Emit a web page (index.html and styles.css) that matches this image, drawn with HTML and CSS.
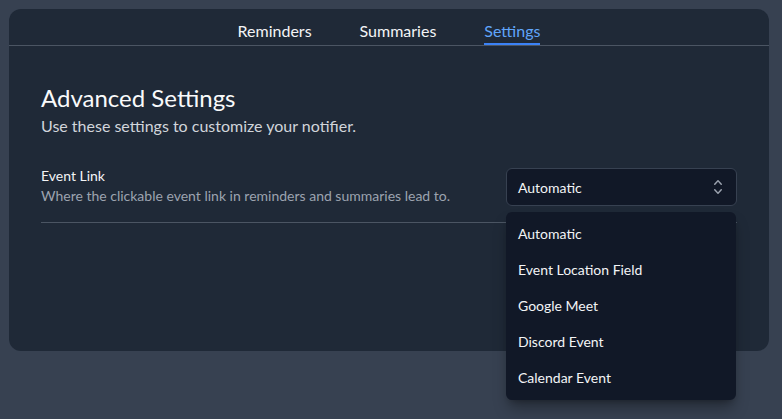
FILE: index.html
```html
<!DOCTYPE html>
<html lang="en">
<head>
<meta charset="utf-8">
<title>Advanced Settings</title>
<link rel="stylesheet" href="styles.css">
</head>
<body>
<div class="card">
  <nav class="tabs">
    <a class="tab">Reminders</a>
    <a class="tab">Summaries</a>
    <a class="tab active">Settings</a>
  </nav>
  <section class="content">
    <h1 class="title">Advanced Settings</h1>
    <p class="subtitle">Use these settings to customize your notifier.</p>
    <div class="setting">
      <div class="setting-text">
        <div class="setting-label">Event Link</div>
        <div class="setting-desc">Where the clickable event link in reminders and summaries lead to.</div>
      </div>
      <div class="select-wrap">
        <button class="select">
          <span>Automatic</span>
          <svg class="chevron" viewBox="0 0 20 20" fill="currentColor" aria-hidden="true"><path fill-rule="evenodd" d="M10 3a.75.75 0 01.55.24l3.25 3.5a.75.75 0 11-1.1 1.02L10 4.852 7.3 7.76a.75.75 0 01-1.1-1.02l3.25-3.5A.75.75 0 0110 3zm-3.76 9.2a.75.75 0 011.06.04l2.7 2.908 2.7-2.908a.75.75 0 111.1 1.02l-3.25 3.5a.75.75 0 01-1.1 0l-3.25-3.5a.75.75 0 01.04-1.06z" clip-rule="evenodd"/></svg>
        </button>
        <ul class="options">
          <li class="option">Automatic</li>
          <li class="option">Event Location Field</li>
          <li class="option">Google Meet</li>
          <li class="option">Discord Event</li>
          <li class="option">Calendar Event</li>
        </ul>
      </div>
    </div>
  </section>
</div>
</body>
</html>
```

FILE: styles.css
```css
* { box-sizing: border-box; }
html, body { margin: 0; padding: 0; }
body {
  background: #374151;
  font-family: Lato, "Noto Sans", sans-serif;
  color: #f3f4f6;
  height: 419px;
  padding: 9px 13px 0 9px;
}
.card {
  background: #1f2937;
  border-radius: 12px;
  width: 760px;
  height: 342px;
}
.tabs {
  display: flex;
  justify-content: center;
  gap: 48px;
  border-bottom: 1px solid #4b5563;
}
.tab {
  font-size: 16px;
  line-height: 24px;
  padding-top: 10px;
  border-bottom: 2px solid transparent;
  color: #f3f4f6;
}
.tab.active {
  color: #60a5fa;
  border-bottom-color: #3b82f6;
}
.content {
  padding: 36px 32px 0 32px;
}
.title {
  margin: 0;
  font-size: 24px;
  line-height: 32px;
  font-weight: 400;
  color: #f9fafb;
}
.subtitle {
  margin: 0;
  font-size: 16px;
  line-height: 24px;
  color: #d1d5db;
}
.setting {
  margin-top: 28px;
  display: flex;
  justify-content: space-between;
  align-items: center;
  border-bottom: 1px solid #4b5563;
  padding-bottom: 16px;
}
.setting-label {
  font-size: 14px;
  line-height: 20px;
  color: #f3f4f6;
}
.setting-desc {
  font-size: 14px;
  line-height: 20px;
  color: #9ca3af;
}
.select-wrap {
  position: relative;
  width: 231px;
}
.select {
  display: flex;
  align-items: center;
  justify-content: space-between;
  width: 100%;
  height: 38px;
  padding: 0 8px 0 11px;
  background: #111827;
  border: 1px solid #374151;
  border-radius: 6px;
  font: inherit;
  font-size: 14px;
  color: #f3f4f6;
  margin-top: 2px;
}
.chevron {
  width: 20px;
  height: 20px;
  color: #9ca3af;
}
.options {
  position: absolute;
  left: 0;
  right: 1px;
  top: calc(100% + 6px);
  margin: 0;
  padding: 4px 0;
  list-style: none;
  background: #111827;
  border-radius: 6px;
  box-shadow: 0 10px 15px -3px rgba(0,0,0,0.35), 0 4px 6px -4px rgba(0,0,0,0.3);
}
.option {
  height: 36px;
  line-height: 36px;
  padding-left: 12px;
  font-size: 14px;
  color: #f3f4f6;
}
```
